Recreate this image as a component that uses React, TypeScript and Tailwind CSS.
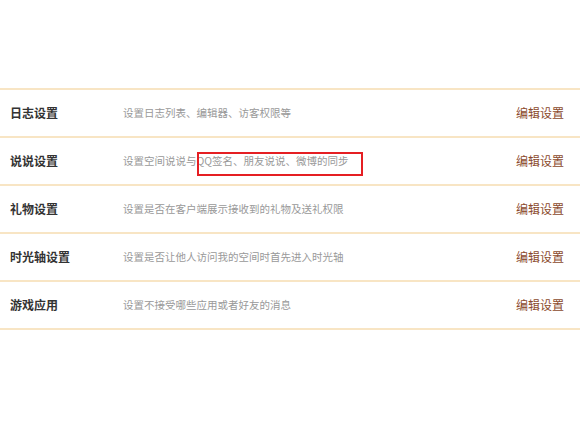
import React from "react";

const rows = [
  { t: "日志设置", d: "设置日志列表、编辑器、访客权限等" },
  { t: "说说设置", d: "设置空间说说与", hl: "QQ签名、朋友说说、微博的同步" },
  { t: "礼物设置", d: "设置是否在客户端展示接收到的礼物及送礼权限" },
  { t: "时光轴设置", d: "设置是否让他人访问我的空间时首先进入时光轴" },
  { t: "游戏应用", d: "设置不接受哪些应用或者好友的消息" },
];

export default function App() {
  return (
    <div
      className="w-[580px] h-[435px] bg-white overflow-hidden"
      style={{ fontFamily: '"Noto Sans CJK SC", "Noto Sans", sans-serif' }}
    >
      <div className="h-[88px]" />
      <div className="border-t-2 border-solid border-[#f8e5c4]">
        {rows.map((r) => (
          <div
            key={r.t}
            className="h-[48px] flex items-center border-b-2 border-solid border-[#f8e5c4]"
          >
            <div className="w-[123px] pl-[10px] text-[12px] font-bold text-[#333]">{r.t}</div>
            <div className="flex-1 flex items-center text-[10.5px] text-[#999]">
              <span>{r.d}</span>
              {r.hl && (
                <span className="relative">
                  {r.hl}
                  <span className="absolute left-0 top-[-1px] w-[166px] h-[24px] border-2 border-[#e51f23]" />
                </span>
              )}
            </div>
            <div className="pr-[16px] text-[12px] text-[#8b4a2c]">编辑设置</div>
          </div>
        ))}
      </div>
    </div>
  );
}
